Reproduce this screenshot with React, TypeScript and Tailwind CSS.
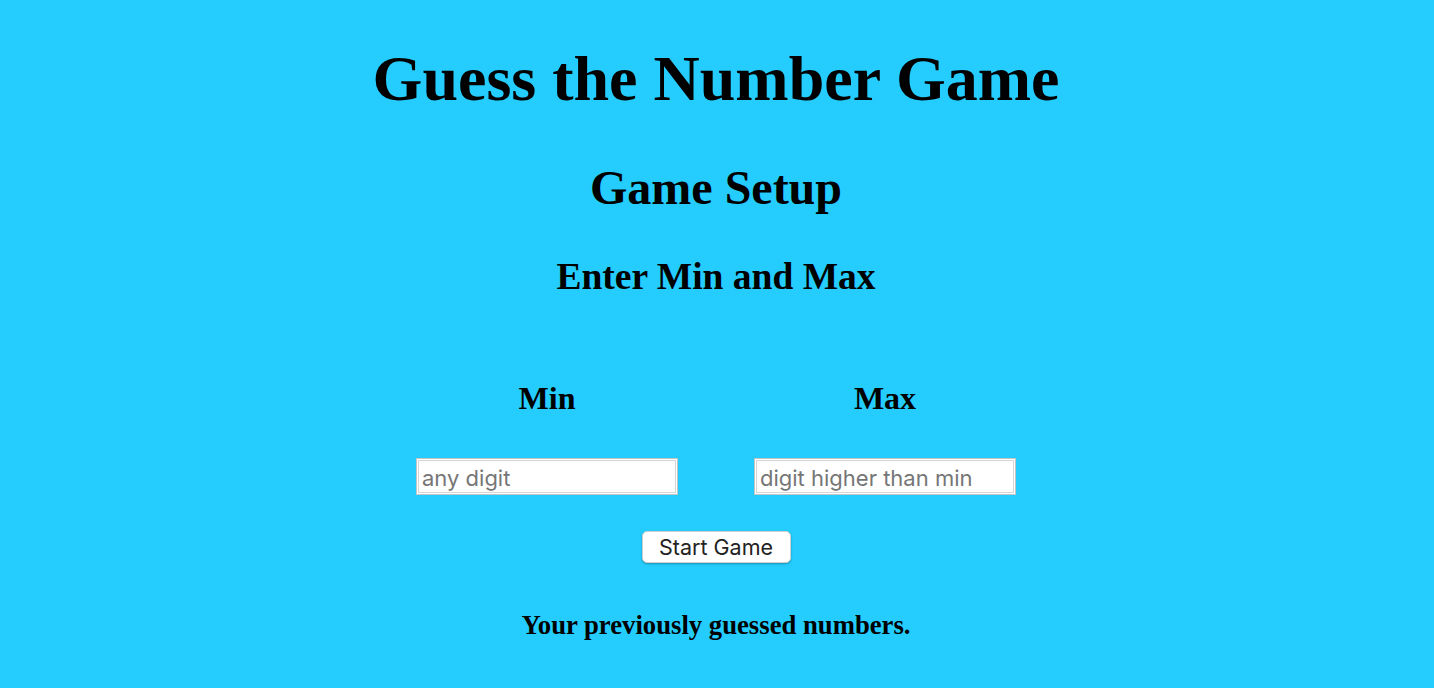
import React from "react";

export default function App() {
  const serif = { fontFamily: '"Liberation Serif", "Times New Roman", serif' };
  const sans = { fontFamily: 'Inter, "Noto Sans", sans-serif' };
  return (
    <div
      className="w-full min-h-[688px] bg-[#24cdfe] text-black flex flex-col items-center font-bold pr-[2px]"
      style={serif}
    >
      <h1 className="mt-[47px] text-[64px] leading-none">Guess the Number Game</h1>
      <h2 className="mt-[53px] text-[48px] leading-none">Game Setup</h2>
      <h3 className="mt-[46px] text-[37.5px] leading-none">Enter Min and Max</h3>
      <div className="mt-[86px] flex gap-[76px]">
        <div className="w-[262px] flex flex-col items-center">
          <h4 className="text-[32px] leading-none">Min</h4>
          <input
            className="mt-[44px] w-[262px] h-[37px] bg-white border border-[#c4c4c4] shadow-[inset_0_0_0_1px_#ffffff,inset_0_0_0_2px_#d6d6d6] px-[5px] pt-[3px] text-[22px] font-normal text-black placeholder:text-[#767676] outline-none"
            style={sans}
            placeholder="any digit"
          />
        </div>
        <div className="w-[262px] flex flex-col items-center">
          <h4 className="text-[32px] leading-none">Max</h4>
          <input
            className="mt-[44px] w-[262px] h-[37px] bg-white border border-[#c4c4c4] shadow-[inset_0_0_0_1px_#ffffff,inset_0_0_0_2px_#d6d6d6] px-[5px] pt-[3px] text-[22px] font-normal text-black placeholder:text-[#767676] outline-none"
            style={sans}
            placeholder="digit higher than min"
          />
        </div>
      </div>
      <button
        className="mt-[36px] w-[149px] h-[32px] bg-white rounded-[5px] border border-[#d0d0d0] shadow-[0_1px_2px_rgba(0,0,0,0.3)] pt-[3px] text-[21.5px] font-normal text-[#222] leading-none"
        style={sans}
      >
        Start Game
      </button>
      <p className="mt-[49px] text-[26.7px] leading-none">Your previously guessed numbers.</p>
    </div>
  );
}
